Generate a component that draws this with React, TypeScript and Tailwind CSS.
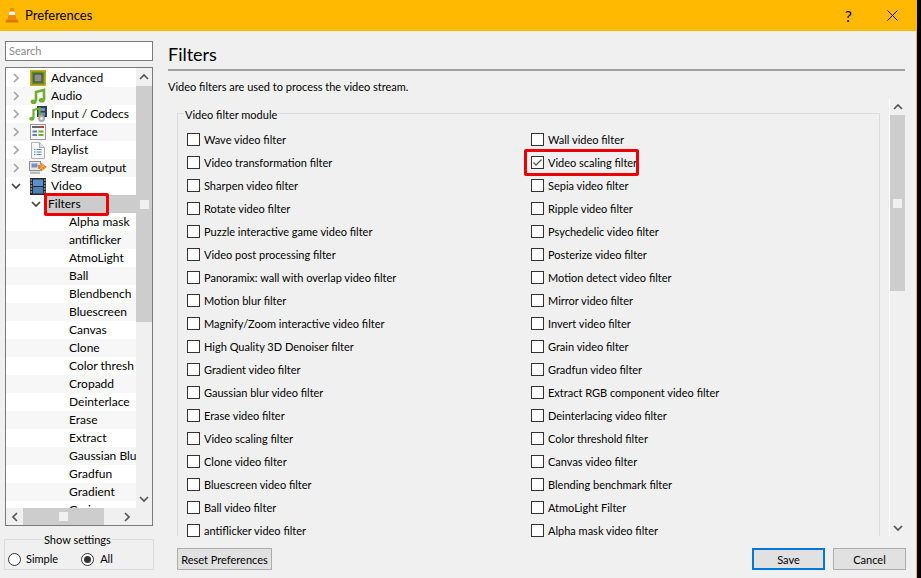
import React from 'react';

const leftFilters = [
  'Wave video filter',
  'Video transformation filter',
  'Sharpen video filter',
  'Rotate video filter',
  'Puzzle interactive game video filter',
  'Video post processing filter',
  'Panoramix: wall with overlap video filter',
  'Motion blur filter',
  'Magnify/Zoom interactive video filter',
  'High Quality 3D Denoiser filter',
  'Gradient video filter',
  'Gaussian blur video filter',
  'Erase video filter',
  'Video scaling filter',
  'Clone video filter',
  'Bluescreen video filter',
  'Ball video filter',
  'antiflicker video filter',
];

const rightFilters = [
  'Wall video filter',
  'Video scaling filter',
  'Sepia video filter',
  'Ripple video filter',
  'Psychedelic video filter',
  'Posterize video filter',
  'Motion detect video filter',
  'Mirror video filter',
  'Invert video filter',
  'Grain video filter',
  'Gradfun video filter',
  'Extract RGB component video filter',
  'Deinterlacing video filter',
  'Color threshold filter',
  'Canvas video filter',
  'Blending benchmark filter',
  'AtmoLight Filter',
  'Alpha mask video filter',
];

const subItems = [
  'Alpha mask',
  'antiflicker',
  'AtmoLight',
  'Ball',
  'Blendbench',
  'Bluescreen',
  'Canvas',
  'Clone',
  'Color thresh',
  'Cropadd',
  'Deinterlace',
  'Erase',
  'Extract',
  'Gaussian Blu',
  'Gradfun',
  'Gradient',
  'Grain',
];

function Chevron({ dir, className = 'text-[#555]' }: { dir: 'up' | 'down' | 'left' | 'right'; className?: string }) {
  const paths = {
    up: 'M1 7 5 3l4 4',
    down: 'M1 3l4 4 4-4',
    left: 'M7 1 3 5l4 4',
    right: 'M3 1l4 4-4 4',
  };
  return (
    <svg width="10" height="10" viewBox="0 0 10 10" fill="none" stroke="currentColor" strokeWidth="1.7" className={className}>
      <path d={paths[dir]} />
    </svg>
  );
}

function Cone() {
  return (
    <svg width="14" height="17" viewBox="0 0 14 17">
      <path d="M5.4 1h3.2l3 11.500H2.400z" fill="#ef8a0e" />
      <path d="M4.500 4.500h5l.8 3.500H3.700z" fill="#f2f2f2" />
      <path d="M1.200 12.500h11.600l.9 3H.3z" fill="#d9780d" />
    </svg>
  );
}

const icons: Record<string, React.ReactNode> = {
  Advanced: (
    <svg width="16" height="16" viewBox="0 0 16 16">
      <rect width="16" height="16" fill="#d0a81e" />
      <rect x="1.500" y="1.500" width="13" height="13" fill="#5d8f2a" />
      <rect x="3.500" y="3.500" width="9" height="9" fill="#3f3f3f" />
      <rect x="4.500" y="4.500" width="7" height="7" fill="#8e8e8e" />
    </svg>
  ),
  Audio: (
    <svg width="16" height="17" viewBox="0 0 16 17">
      <path d="M6 13V4l8-2v10" fill="none" stroke="#6fae2e" strokeWidth="2.600" />
      <ellipse cx="3.600" cy="13.800" rx="3" ry="2.300" fill="#6fae2e" />
      <ellipse cx="11.800" cy="12.300" rx="3" ry="2.300" fill="#6fae2e" />
    </svg>
  ),
  'Input / Codecs': (
    <svg width="18" height="17" viewBox="0 0 18 17">
      <rect x="8" y="0" width="10" height="11" fill="#2f3f52" />
      <rect x="10" y="2" width="6" height="3" fill="#6f93b9" />
      <rect x="10" y="6.500" width="6" height="3" fill="#6f93b9" />
      <path d="M4.500 12V4l6-1.500v8" fill="none" stroke="#6fae2e" strokeWidth="2.200" />
      <ellipse cx="2.800" cy="12.800" rx="2.600" ry="2" fill="#6fae2e" />
      <circle cx="12.500" cy="12.500" r="3.500" fill="#a9a9a9" />
      <circle cx="12.500" cy="12.500" r="1.400" fill="#f2f2f2" />
    </svg>
  ),
  Interface: (
    <svg width="16" height="16" viewBox="0 0 16 16">
      <rect x="0.500" y="0.500" width="15" height="15" fill="#f5f5f5" stroke="#9a9a9a" />
      <rect x="2" y="2" width="9" height="2" fill="#666" />
      <rect x="11" y="2" width="3" height="2" fill="#d33" />
      <rect x="2.500" y="6.500" width="4.500" height="2" fill="#5f86b0" />
      <rect x="8.500" y="6.500" width="5" height="2" fill="#6fae2e" />
      <rect x="2.500" y="10" width="4.500" height="2" fill="#5f86b0" />
      <rect x="8.500" y="10" width="5" height="2" fill="#6fae2e" />
    </svg>
  ),
  Playlist: (
    <svg width="14" height="17" viewBox="0 0 14 17">
      <path d="M.5.500h8l5 5v11H.5z" fill="#f7f7f7" stroke="#b0b0b0" />
      <path d="M8.500.500v5h5" fill="#e2e2e2" stroke="#b0b0b0" />
      <path d="M3 7.500h1.500M5.500 7.500h5M3 10h1.500M5.500 10h5M3 12.500h1.500M5.500 12.500h5" stroke="#5f86b0" />
    </svg>
  ),
  'Stream output': (
    <svg width="18" height="16" viewBox="0 0 18 16">
      <rect x="0.500" y="1.500" width="11" height="9" fill="#e6e6e6" stroke="#8f8f8f" />
      <rect x="2.500" y="3.500" width="6" height="4" fill="#6f93c9" />
      <rect x="1" y="11.500" width="10" height="2.500" fill="#bdbdbd" />
      <path d="M9 5h2l1-2.500L18 7l-6 4.500L11 9H9z" fill="#e5832a" />
      <path d="M11 4l3 6M13 3.500l3 5M11 9l4-4" stroke="#f5c08a" strokeWidth="0.700" />
    </svg>
  ),
  Video: (
    <svg width="16" height="17" viewBox="0 0 16 17">
      <rect width="16" height="17" fill="#26292c" />
      <rect x="3" y="1.500" width="10" height="6.500" fill="#5b8fd0" />
      <rect x="3" y="9" width="10" height="6.500" fill="#4f7db5" />
      <path d="M.5 2h1.500M.5 5h1.500M.5 8h1.500M.5 11h1.500M.5 14h1.500M14 2h1.500M14 5h1.500M14 8h1.500M14 11h1.500M14 14h1.500" stroke="#e5e5e5" />
    </svg>
  ),
};

const topItems = ['Advanced', 'Audio', 'Input / Codecs', 'Interface', 'Playlist', 'Stream output'];

function TreeRow({ index, children }: { index: number; children: React.ReactNode }) {
  return (
    <div className={`flex h-[18px] shrink-0 items-center overflow-hidden whitespace-nowrap ${index % 2 === 1 ? 'bg-[#f7f7f7]' : 'bg-white'}`}>
      {children}
    </div>
  );
}

function CategoryRow({ index, label, open }: { index: number; label: string; open?: boolean }) {
  return (
    <TreeRow index={index}>
      <span className="ml-[5px] flex w-[10px] justify-center">
        <Chevron dir={open ? 'down' : 'right'} className={open ? 'text-[#444]' : 'text-[#a6a6a6]'} />
      </span>
      <span className="ml-[8px] flex w-[18px] justify-center">{icons[label]}</span>
      <span className="ml-[4px]">{label}</span>
    </TreeRow>
  );
}

function FilterCheck({ label, checked, boxed }: { label: string; checked?: boolean; boxed?: boolean }) {
  return (
    <div className="relative flex h-[23px] items-center">
      <span className="flex h-[13px] w-[13px] shrink-0 items-center justify-center border border-[#333] bg-white">
        {checked && (
          <svg width="11" height="11" viewBox="0 0 11 11" fill="none" stroke="#555" strokeWidth="1.300">
            <path d="M1.500 5.500 4 8l5.500-5.500" />
          </svg>
        )}
      </span>
      <span className="ml-[4px] whitespace-nowrap pt-[2px]">{label}</span>
      {boxed && <span className="absolute left-[-7px] top-[-2px] h-[27px] w-[115px] rounded-[2px] border-[3.5px] border-[#ee0000]" />}
    </div>
  );
}

export default function App() {
  return (
    <div className="flex h-[578px] w-[921px] overflow-hidden bg-black font-['Lato','Open_Sans',sans-serif] text-[11px] text-black">
      <div className="flex h-full w-[917px] flex-col border-r border-[#ffb900] bg-[#f0f0f0]">
        {/* title bar */}
        <div className="flex h-[31px] shrink-0 items-center bg-[#ffb900]">
          <span className="ml-[4px] flex w-[16px] justify-center"><Cone /></span>
          <span className="ml-[5px] text-[13px]">Preferences</span>
          <span className="ml-auto mr-[35px] text-[16px]">?</span>
          <svg width="11" height="11" viewBox="0 0 11 11" stroke="#111" strokeWidth="1" className="mr-[18px]">
            <path d="M.5.5l10 10M10.500.5l-10 10" />
          </svg>
        </div>

        <div className="flex min-h-0 flex-1">
          {/* left column */}
          <div className="flex w-[168px] shrink-0 flex-col pl-[5px] pt-[10px]">
            <div className="flex h-[20px] w-[148px] items-center border border-[#7a7a7a] bg-white pl-[3px] text-[#8a8a8a]">Search</div>
            <div className="mt-[6px] flex h-[459px] w-[148px] flex-col border border-[#7a7a7a] bg-white text-[12px]">
              <div className="flex min-h-0 flex-1">
                <div className="flex min-w-0 flex-1 flex-col overflow-hidden pt-px">
                  {topItems.map((label, i) => (
                    <CategoryRow key={label} index={i} label={label} />
                  ))}
                  <CategoryRow index={6} label="Video" open />
                  <div className="relative flex h-[18px] shrink-0 items-center">
                    <span className="ml-[25px] flex w-[10px] justify-center">
                      <Chevron dir="down" className="text-[#444]" />
                    </span>
                    <span className="ml-[5px] flex h-full flex-1 items-center bg-[#cccccc] pl-[2px]">Filters</span>
                    <span className="absolute left-[38px] top-[-2px] h-[23px] w-[65px] rounded-[2px] border-[3.5px] border-[#ee0000]" />
                  </div>
                  {subItems.map((label, i) => (
                    <TreeRow key={label} index={i}>
                      <span className="ml-[63px]">{label}</span>
                    </TreeRow>
                  ))}
                </div>
                <div className="flex w-[16px] shrink-0 flex-col items-center bg-[#f0f0f0]">
                  <span className="flex h-[18px] items-center"><Chevron dir="up" /></span>
                  <div className="flex h-[236px] w-full items-center justify-center bg-[#cdcdcd]">
                    <span className="h-[9px] w-[9px] bg-[#f0f0f0]" />
                  </div>
                  <span className="mt-auto flex h-[18px] items-center"><Chevron dir="down" /></span>
                </div>
              </div>
              <div className="flex h-[17px] shrink-0 items-center bg-[#f0f0f0]">
                <span className="flex w-[17px] justify-center"><Chevron dir="left" /></span>
                <div className="flex h-full w-[81px] items-center justify-center bg-[#cdcdcd]">
                  <span className="h-[9px] w-[9px] bg-[#f0f0f0]" />
                </div>
                <span className="ml-auto mr-[20px] flex"><Chevron dir="right" /></span>
              </div>
            </div>
            <div className="relative ml-[-1px] mt-[13px] flex h-[31px] w-[150px] items-end border border-[#dcdcdc] pb-[2px] pl-[3px]">
              <span className="absolute left-[38px] top-[-8px] bg-[#f0f0f0] px-[1px]">Show settings</span>
              <span className="mb-[1px] flex h-[13px] w-[13px] rounded-full border border-[#333] bg-white" />
              <span className="ml-[5px]">Simple</span>
              <span className="mb-[1px] ml-[23px] flex h-[13px] w-[13px] items-center justify-center rounded-full border border-[#333] bg-white">
                <span className="h-[7px] w-[7px] rounded-full bg-[#333]" />
              </span>
              <span className="ml-[6px]">All</span>
            </div>
          </div>

          {/* right panel */}
          <div className="flex min-w-0 flex-1 flex-col">
            <div className="mr-[11px] flex h-[40px] shrink-0 items-center border-b-2 border-[#a0a0a0] pt-[7px] text-[18px] leading-none">Filters</div>
            <div className="mt-[7px] h-[18px] leading-[18px]">Video filters are used to process the video stream.</div>
            <div className="mt-[3px] flex h-[437px] shrink-0">
              <div className="relative ml-[9px] mt-[14px] h-[423px] w-[703px] border-x border-t border-[#dcdcdc]">
                <span className="absolute left-[6px] top-[-7px] bg-[#f0f0f0] px-[1px] leading-[16px]">Video filter module</span>
                <div className="grid grid-cols-[344px_1fr] pl-[9px] pt-[14px]">
                  <div className="flex flex-col">
                    {leftFilters.map((f) => (
                      <FilterCheck key={f} label={f} />
                    ))}
                  </div>
                  <div className="flex flex-col">
                    {rightFilters.map((f) => (
                      <FilterCheck key={f} label={f} checked={f === 'Video scaling filter'} boxed={f === 'Video scaling filter'} />
                    ))}
                  </div>
                </div>
              </div>
              <div className="ml-[9px] flex w-[16px] flex-col items-center border-l border-white">
                <span className="flex h-[16px] items-center"><Chevron dir="up" /></span>
                <div className="flex h-[176px] w-[15px] items-center justify-center bg-[#cdcdcd]">
                  <span className="h-[9px] w-[9px] bg-[#f0f0f0]" />
                </div>
                <span className="mt-auto flex h-[16px] items-center"><Chevron dir="down" /></span>
              </div>
            </div>
            <div className="flex flex-1 items-start pt-[12px]">
              <button className="ml-[9px] h-[22px] w-[95px] whitespace-nowrap border border-[#adadad] bg-[#e1e1e1] pt-[2px]">Reset Preferences</button>
              <button className="ml-auto h-[22px] w-[73px] border-2 border-[#0078d7] bg-[#e1e1e1] pt-[2px]">Save</button>
              <button className="ml-[8px] mr-[10px] h-[22px] w-[73px] border border-[#adadad] bg-[#e1e1e1] pt-[2px]">Cancel</button>
            </div>
          </div>
        </div>
      </div>
    </div>
  );
}
